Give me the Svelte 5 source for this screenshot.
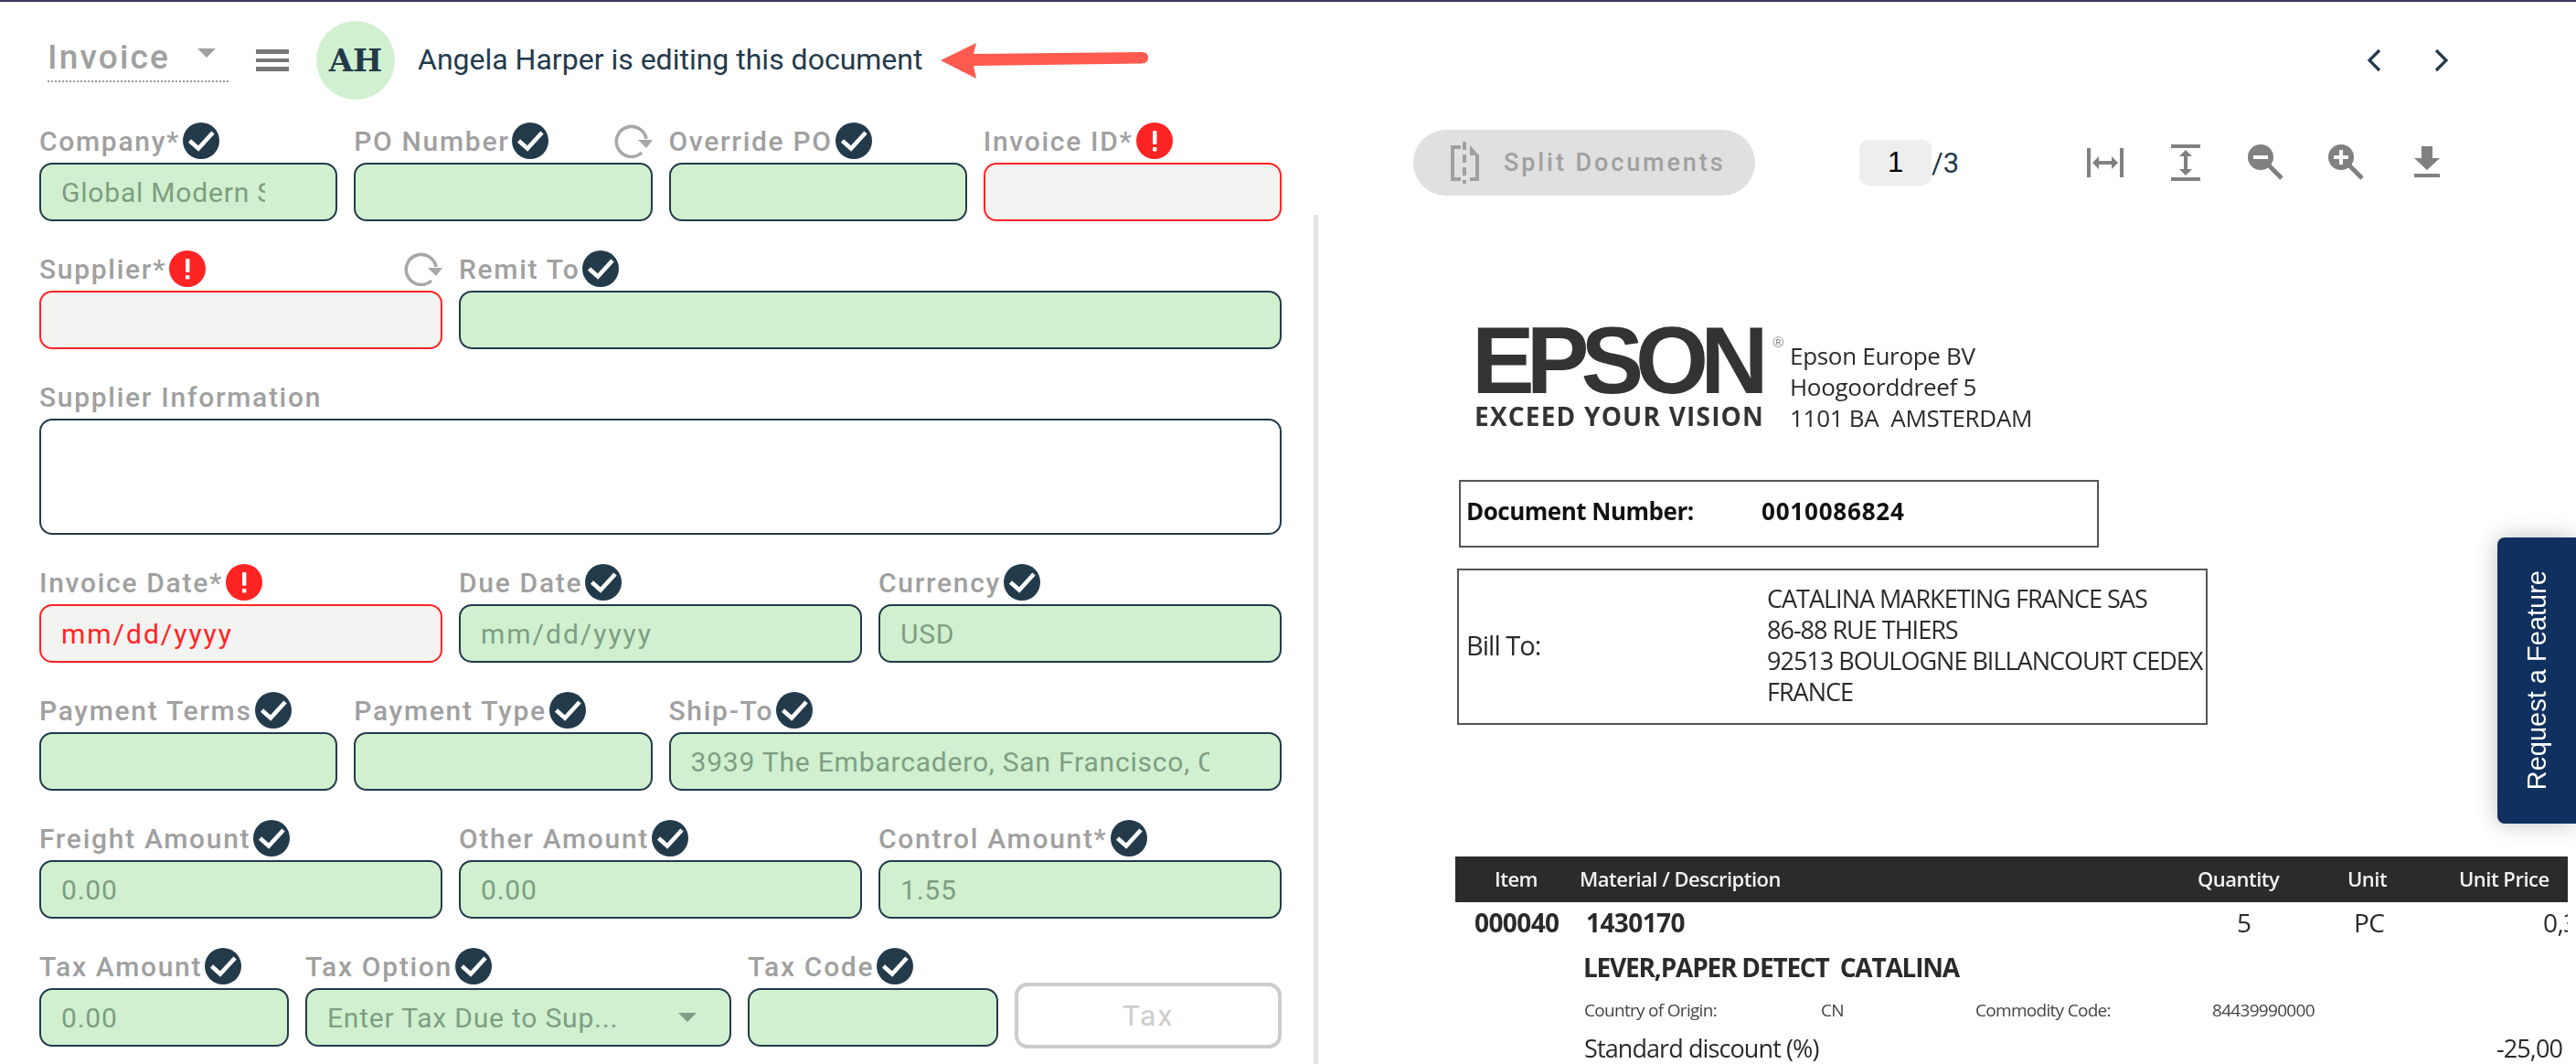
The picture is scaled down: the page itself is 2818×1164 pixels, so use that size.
<script>
	const rows = [
		[
			{ label: 'Company*', status: 'ok', value: 'Global Modern Supplies', span: 3 },
			{ label: 'PO Number', status: 'ok', span: 3, refresh: true },
			{ label: 'Override PO', status: 'ok', span: 3 },
			{ label: 'Invoice ID*', status: 'err', span: 3 }
		],
		[
			{ label: 'Supplier*', status: 'err', span: 4, refresh: true },
			{ label: 'Remit To', status: 'ok', span: 8 }
		],
		[{ label: 'Supplier Information', span: 12, area: true }],
		[
			{ label: 'Invoice Date*', status: 'err', value: 'mm/dd/yyyy', span: 4, date: true },
			{ label: 'Due Date', status: 'ok', value: 'mm/dd/yyyy', span: 4, date: true },
			{ label: 'Currency', status: 'ok', value: 'USD', span: 4 }
		],
		[
			{ label: 'Payment Terms', status: 'ok', span: 3 },
			{ label: 'Payment Type', status: 'ok', span: 3 },
			{ label: 'Ship-To', status: 'ok', value: '3939 The Embarcadero, San Francisco, CA', span: 6 }
		],
		[
			{ label: 'Freight Amount', status: 'ok', value: '0.00', span: 4 },
			{ label: 'Other Amount', status: 'ok', value: '0.00', span: 4 },
			{ label: 'Control Amount*', status: 'ok', value: '1.55', span: 4 }
		]
	];

	const address = ['Epson Europe BV', 'Hoogoorddreef 5', '1101 BA  AMSTERDAM'];
	const billTo = [
		'CATALINA MARKETING FRANCE SAS',
		'86-88 RUE THIERS',
		'92513 BOULOGNE BILLANCOURT CEDEX',
		'FRANCE'
	];
</script>

{#snippet okIcon()}
	<svg class="status" viewBox="0 0 40 40" aria-hidden="true">
		<circle cx="20" cy="20" r="20" fill="#233a4b" />
		<path d="M7.5 20 L17 28.5 L33 11" fill="none" stroke="#fff" stroke-width="4.6" />
	</svg>
{/snippet}

{#snippet errIcon()}
	<svg class="status" viewBox="0 0 40 40" aria-hidden="true">
		<circle cx="20" cy="20" r="20" fill="#ff2424" />
		<rect x="18" y="9" width="4.4" height="15" rx="1.4" fill="#fff" />
		<rect x="18" y="27" width="4.4" height="4.4" rx="1" fill="#fff" />
	</svg>
{/snippet}

{#snippet refreshIcon()}
	<svg class="refresh" viewBox="0 0 42 38" aria-hidden="true">
		<path d="M30 32 A16.5 16.5 0 1 1 35 17" fill="none" stroke="#a8a8a8" stroke-width="3.6" />
		<path d="M26 18 H42 L35 27 Z" fill="#a8a8a8" />
	</svg>
{/snippet}

{#snippet fieldLabel(f)}
	<div class="label">
		<span>{f.label}</span>
		{#if f.status === 'ok'}{@render okIcon()}{/if}
		{#if f.status === 'err'}{@render errIcon()}{/if}
		{#if f.refresh}{@render refreshIcon()}{/if}
	</div>
{/snippet}

<div class="page">
	<header class="topbar">
		<div class="doc-type">
			<span>Invoice</span>
			<i class="caret"></i>
		</div>
		<div class="burger"><i></i><i></i><i></i></div>
		<div class="avatar">AH</div>
		<div class="editing">Angela Harper is editing this document</div>
		<svg class="arrow" viewBox="0 0 228 40" aria-hidden="true">
			<path
				d="M0 20 L39 1 L36 13 L220 11 Q227 11 227 17 Q227 23 220 23.5 L36 26 L39 40 Z"
				fill="#ff5a4f"
			/>
		</svg>
		<nav class="pager">
			<svg viewBox="0 0 18 26" aria-hidden="true"><path d="M15 2 L4 13 L15 24" /></svg>
			<svg viewBox="0 0 18 26" aria-hidden="true"><path d="M3 2 L14 13 L3 24" /></svg>
		</nav>
	</header>

	<main class="body">
		<section class="form">
			{#each rows as row}
				<div class="row">
					{#each row as f}
						<div class="field span-{f.span}">
							{@render fieldLabel(f)}
							{#if f.area}
								<textarea class="input area" readonly></textarea>
							{:else}
								<input
									class="input"
									class:good={f.status === 'ok'}
									class:bad={f.status === 'err'}
									class:date={f.date}
									readonly
									value={f.value ?? ''}
								/>
							{/if}
						</div>
					{/each}
				</div>
			{/each}

			<div class="row tax-row">
				<div class="field">
					{@render fieldLabel({ label: 'Tax Amount', status: 'ok' })}
					<input class="input good" readonly value="0.00" />
				</div>
				<div class="field">
					{@render fieldLabel({ label: 'Tax Option', status: 'ok' })}
					<div class="input good select">
						<span>Enter Tax Due to Sup...</span>
						<i class="caret small"></i>
					</div>
				</div>
				<div class="field">
					{@render fieldLabel({ label: 'Tax Code', status: 'ok' })}
					<input class="input good" readonly />
				</div>
				<button class="tax-btn" disabled>Tax</button>
			</div>
		</section>

		<div class="divider"></div>

		<section class="viewer">
			<div class="toolbar">
				<button class="split" disabled>
					<svg viewBox="0 0 34 46" aria-hidden="true">
						<path d="M12 6 H3 V41 H12" fill="none" stroke="#a0a0a0" stroke-width="4" />
						<path d="M16 0 V46" fill="none" stroke="#a0a0a0" stroke-width="4" stroke-dasharray="9 5" />
						<path d="M22 4 L32 15 H22 Z" fill="#a0a0a0" />
						<path d="M30 14 V41 H22" fill="none" stroke="#a0a0a0" stroke-width="4" />
					</svg>
					<span>Split Documents</span>
				</button>
				<div class="page-no">
					<span class="page-box">1</span>
					<span class="page-total">/3</span>
				</div>
				<div class="tools">
					<svg viewBox="0 0 48 48" aria-hidden="true">
						<path d="M4 8h4v32H4zM40 8h4v32h-4z" />
						<path d="M10 24l7-7v5h14v-5l7 7-7 7v-5H17v5z" />
					</svg>
					<svg viewBox="0 0 48 48" aria-hidden="true">
						<path d="M8 4h32v4H8zM8 40h32v4H8z" />
						<path d="M24 10l7 7h-5v14h5l-7 7-7-7h5V17h-5z" />
					</svg>
					<svg viewBox="0 0 48 48" aria-hidden="true">
						<circle cx="18" cy="18" r="14" />
						<path d="M26 26 L41 41" stroke="#808080" stroke-width="5" />
						<path d="M10 16h16v4H10z" fill="#fff" />
					</svg>
					<svg viewBox="0 0 48 48" aria-hidden="true">
						<circle cx="18" cy="18" r="14" />
						<path d="M26 26 L41 41" stroke="#808080" stroke-width="5" />
						<path d="M10 16h6v-6h4v6h6v4h-6v6h-4v-6h-6z" fill="#fff" />
					</svg>
					<svg viewBox="0 0 48 48" aria-hidden="true">
						<path d="M18 6h12v13h8L24 32 10 19h8zM10 36h28v4H10z" />
					</svg>
				</div>
			</div>

			<article class="scan">
				<div class="brand">
					<div class="logo">
						<div class="epson">EPSON<sup>®</sup></div>
						<div class="tagline">EXCEED YOUR VISION</div>
					</div>
					<div class="address">
						{#each address as line}<div>{line}</div>{/each}
					</div>
				</div>

				<div class="doc-number">
					<b class="dn-label">Document Number:</b>
					<b class="dn-value">0010086824</b>
				</div>

				<div class="bill">
					<div class="bill-label">Bill To:</div>
					<div class="bill-lines">
						{#each billTo as line}<div>{line}</div>{/each}
					</div>
				</div>

				<div class="table-head">
					<span>Item</span>
					<span>Material / Description</span>
					<span>Quantity</span>
					<span>Unit</span>
					<span>Unit Price</span>
				</div>

				<div class="line-item">
					<b>000040</b>
					<b>1430170</b>
					<span>5</span>
					<span>PC</span>
					<span>0,3</span>
				</div>
				<div class="item-name">LEVER,PAPER DETECT  CATALINA</div>
				<div class="item-meta">
					<span>Country of Origin:</span>
					<span>CN</span>
					<span>Commodity Code:</span>
					<span>84439990000</span>
				</div>
				<div class="item-discount">
					<span>Standard discount (%)</span>
					<span>-25,00</span>
				</div>
			</article>
		</section>
	</main>

	<aside class="feature-tab"><span>Request a Feature</span></aside>
</div>

<style>
	:global(body) {
		margin: 0;
		background: #fff;
	}

	.page {
		position: relative;
		width: 2818px;
		height: 1164px;
		overflow: hidden;
		border-top: 2px solid #3a3a63;
		box-sizing: border-box;
		font-family: Roboto, sans-serif;
		color: #233a4b;
	}

	.topbar {
		display: flex;
		align-items: center;
		height: 128px;
		padding: 0 138px 0 52px;
		box-sizing: border-box;
	}

	.doc-type {
		display: flex;
		justify-content: space-between;
		align-items: center;
		width: 198px;
		height: 58px;
		margin-top: -10px;
		padding: 5px 14px 0 0;
		box-sizing: border-box;
		border-bottom: 2px dotted #999;
		font-size: 37px;
		font-weight: 500;
		letter-spacing: 2.2px;
		color: #a0a0a0;
	}

	.caret {
		width: 0;
		height: 0;
		margin-bottom: 10px;
		border-left: 10px solid transparent;
		border-right: 10px solid transparent;
		border-top: 10px solid #a0a0a0;
	}

	.burger {
		display: flex;
		flex-direction: column;
		gap: 5px;
		width: 36px;
		margin-left: 30px;
	}

	.burger i {
		height: 4.6px;
		background: #777;
	}

	.avatar {
		display: flex;
		align-items: center;
		justify-content: center;
		width: 86px;
		height: 86px;
		margin-left: 30px;
		border-radius: 50%;
		background: #d0f0cf;
		font-family: 'DejaVu Serif', serif;
		font-weight: 700;
		font-size: 34px;
	}

	.editing {
		margin: -2px 0 0 25px;
		font-size: 32px;
	}

	.arrow {
		width: 228px;
		height: 40px;
		margin-left: 20px;
	}

	.pager {
		display: flex;
		gap: 56px;
		margin-left: auto;
	}

	.pager svg {
		width: 18px;
		height: 26px;
	}

	.pager path {
		fill: none;
		stroke: #233a4b;
		stroke-width: 3.2;
	}

	.body {
		display: flex;
		height: 1034px;
	}

	.form {
		display: flex;
		flex-direction: column;
		gap: 32px;
		flex: none;
		width: 1437px;
		padding: 4px 35px 0 43px;
		box-sizing: border-box;
	}

	.row {
		display: grid;
		grid-template-columns: repeat(12, 96.75px);
		column-gap: 18px;
	}

	.tax-row {
		grid-template-columns: 273px 466px 274px 292px;
	}

	.span-3 {
		grid-column: span 3;
	}

	.span-4 {
		grid-column: span 4;
	}

	.span-6 {
		grid-column: span 6;
	}

	.span-8 {
		grid-column: span 8;
	}

	.span-12 {
		grid-column: span 12;
	}

	.field {
		min-width: 0;
	}

	.label {
		display: flex;
		align-items: center;
		gap: 3px;
		height: 40px;
		margin-bottom: 4px;
		font-size: 30px;
		font-weight: 500;
		letter-spacing: 1.7px;
		color: #a0a0a0;
		white-space: nowrap;
	}

	.status {
		flex: none;
		width: 40px;
		height: 40px;
	}

	.refresh {
		flex: none;
		width: 42px;
		height: 38px;
		margin-left: auto;
	}

	.input {
		display: block;
		width: 100%;
		height: 64px;
		padding: 0 77px 0 22px;
		box-sizing: border-box;
		border: 2px solid #233a4b;
		border-radius: 14px;
		background: #fff;
		font-family: Roboto, sans-serif;
		font-size: 30px;
		letter-spacing: 0.8px;
		outline: none;
	}

	.area {
		height: 127px;
		resize: none;
	}

	.date {
		letter-spacing: 2px;
	}

	.good {
		background: #d0f0cf;
		color: #7d9e82;
	}

	.bad {
		background: #f3f3f1;
		border-color: #ff2424;
		color: #ff2424;
	}

	.select {
		display: flex;
		align-items: center;
		justify-content: space-between;
		padding-right: 36px;
		white-space: nowrap;
	}

	.small {
		margin: 0;
		border-top-color: #7d9e82;
	}

	.tax-btn {
		height: 72px;
		margin-top: 38px;
		border: 4px solid #ccc;
		border-radius: 14px;
		background: #fff;
		font-family: Roboto, sans-serif;
		font-size: 32px;
		letter-spacing: 2px;
		color: #ccc;
	}

	.divider {
		flex: none;
		width: 5px;
		margin-top: 105px;
		background: #e4e4e4;
	}

	.viewer {
		flex: 1;
		min-width: 0;
		overflow: hidden;
	}

	.toolbar {
		display: flex;
		align-items: center;
		height: 72px;
		margin-top: 12px;
		padding-left: 104px;
	}

	.split {
		display: flex;
		align-items: center;
		gap: 25px;
		width: 374px;
		height: 72px;
		padding: 0 0 0 40px;
		border: 0;
		border-radius: 36px;
		background: #e0e0e0;
		font-family: Roboto, sans-serif;
		font-size: 27px;
		font-weight: 500;
		letter-spacing: 2.9px;
		color: #a0a0a0;
	}

	.split svg {
		width: 34px;
		height: 46px;
	}

	.page-no {
		display: flex;
		align-items: center;
		margin-left: 114px;
		font-size: 31px;
	}

	.page-box {
		width: 79px;
		height: 50px;
		line-height: 50px;
		text-align: center;
		border-radius: 10px;
		background: #eee;
		font-family: 'Liberation Sans', sans-serif;
		color: #000;
	}

	.tools {
		display: flex;
		gap: 40px;
		margin-left: 136px;
	}

	.tools svg {
		width: 48px;
		height: 48px;
		fill: #808080;
	}

	.scan {
		width: 1367px;
		padding-top: 144px;
		overflow: hidden;
		font-family: 'Open Sans', sans-serif;
		color: #2a2a2a;
		filter: blur(0.6px);
	}

	.brand {
		display: flex;
		height: 167px;
		padding-left: 173px;
	}

	.logo {
		width: 343px;
	}

	.epson {
		height: 82px;
		margin-left: -5px;
		font-family: 'Liberation Sans', sans-serif;
		font-weight: 700;
		font-size: 103px;
		line-height: 74px;
		letter-spacing: -9px;
		color: #333;
	}

	.epson sup {
		margin-left: 14px;
		font-size: 16px;
		font-weight: 400;
		letter-spacing: 0;
		vertical-align: 50px;
		line-height: 0;
		color: #888;
	}

	.tagline {
		margin-left: -2px;
		font-size: 28px;
		line-height: 30px;
		font-weight: 700;
		letter-spacing: 1.2px;
		white-space: nowrap;
		color: #333;
	}

	.address {
		margin-top: 14px;
		font-size: 26px;
		line-height: 34px;
		letter-spacing: -0.3px;
		white-space: pre;
	}

	.doc-number {
		display: flex;
		align-items: center;
		width: 700px;
		height: 74px;
		margin-left: 154px;
		padding: 0 0 6px 6px;
		box-sizing: border-box;
		border: 2px solid #555;
		font-size: 26px;
		letter-spacing: -0.5px;
		color: #111;
	}

	.dn-label {
		width: 323px;
	}

	.dn-value {
		letter-spacing: 0.8px;
	}

	.bill {
		display: flex;
		align-items: center;
		width: 821px;
		height: 171px;
		margin: 23px 0 0 152px;
		padding: 0 0 4px 8px;
		box-sizing: border-box;
		border: 2px solid #555;
		font-size: 27px;
		line-height: 34px;
		letter-spacing: -1px;
		white-space: nowrap;
	}

	.bill-label {
		width: 329px;
		font-size: 29px;
	}

	.table-head {
		display: grid;
		grid-template-columns: 136px 676px 164px 122px 1fr;
		align-items: center;
		height: 50px;
		margin: 144px 0 0 150px;
		padding-bottom: 2px;
		box-sizing: border-box;
		background: #2b2b2b;
		color: #f2f2f2;
		font-size: 22px;
		font-weight: 600;
		letter-spacing: -0.5px;
		white-space: nowrap;
	}

	.table-head span:first-child {
		padding-left: 43px;
	}

	.line-item {
		display: grid;
		grid-template-columns: 122px 712px 128px 207px 1fr;
		align-items: center;
		height: 40px;
		margin: 2px 0 0 171px;
		font-size: 28px;
		letter-spacing: -0.6px;
	}

	.item-name {
		margin: 9px 0 0 290px;
		font-size: 28px;
		line-height: 40px;
		font-weight: 700;
		letter-spacing: -1.2px;
		white-space: pre;
	}

	.item-meta {
		display: grid;
		grid-template-columns: 259px 169px 259px 1fr;
		margin: 14px 0 0 291px;
		font-size: 19px;
		line-height: 26px;
		letter-spacing: -0.7px;
		color: #444;
	}

	.item-discount {
		display: flex;
		justify-content: space-between;
		width: 1070px;
		margin: 11px 0 0 291px;
		font-size: 27px;
		line-height: 36px;
		letter-spacing: -0.9px;
	}

	.feature-tab {
		position: absolute;
		top: 586px;
		right: 0;
		display: flex;
		align-items: center;
		justify-content: center;
		width: 86px;
		height: 313px;
		border-radius: 8px 0 0 8px;
		background: #10305f;
		box-shadow: 0 0 24px rgba(0, 0, 0, 0.25);
		color: #fff;
		font-family: 'Liberation Sans', sans-serif;
		font-size: 29px;
	}

	.feature-tab span {
		writing-mode: vertical-rl;
		transform: rotate(180deg);
	}
</style>
